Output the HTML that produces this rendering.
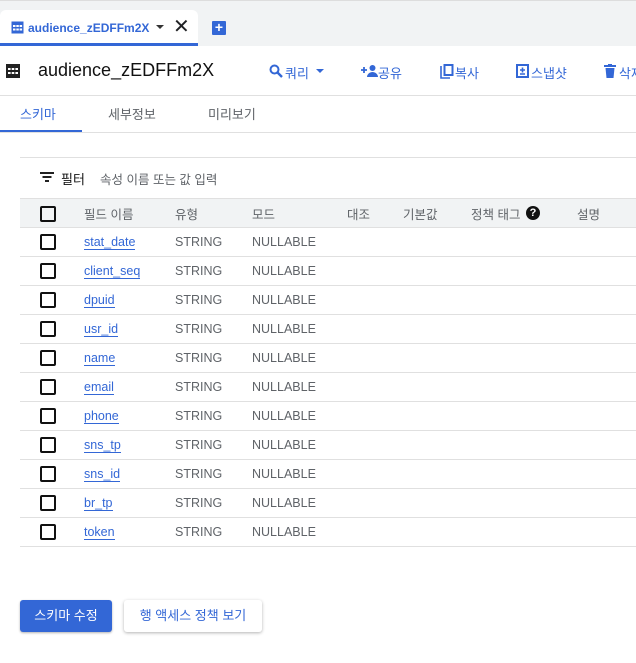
<!DOCTYPE html>
<html><head><meta charset="utf-8"><style>
*{margin:0;padding:0;box-sizing:border-box}
body{width:636px;height:663px;overflow:hidden;background:#fff;font-family:"Liberation Sans","Noto Sans CJK KR",sans-serif;position:relative;color:#202124}
.a{position:absolute;white-space:nowrap}
.blue{color:#3367d6}
.cb{position:absolute;left:40px;width:16px;height:16px;border:2px solid #111;border-radius:2px}
.row{position:absolute;left:20px;width:616px;height:29px;border-bottom:1px solid #e0e0e0;font-size:12.5px}
.row span{position:absolute;top:7px}
.row .n{left:64px;color:#3367d6;border-bottom:1px solid #3367d6;line-height:14px}
.row .t{left:155px;color:#5f6368}
.row .m{left:232px;color:#5f6368}
.row .cb{left:20px;top:6px}
</style></head><body>
<div class="a" style="left:0;top:0;width:636px;height:46px;background:#f1f3f4;border-top:1px solid #ddd"></div>
<div class="a" style="left:0;top:10px;width:198px;height:36px;background:#fff;border-radius:6px 6px 0 0;border-bottom:3px solid #3367d6"></div>
<svg class="a" style="left:11px;top:21px" width="13" height="13" viewBox="0 0 13 13"><rect x="0.5" y="0.5" width="12" height="12" fill="#3367d6"/><g fill="#fff"><rect x="2" y="4" width="2.5" height="2"/><rect x="5.3" y="4" width="2.5" height="2"/><rect x="8.6" y="4" width="2.5" height="2"/><rect x="2" y="7.5" width="2.5" height="2"/><rect x="5.3" y="7.5" width="2.5" height="2"/><rect x="8.6" y="7.5" width="2.5" height="2"/></g></svg>
<div class="a blue" style="left:28px;top:21px;font-size:12px;font-weight:bold">audience_zEDFFm2X</div>
<div class="a" style="left:156px;top:25px;width:0;height:0;border:4px solid transparent;border-top:4px solid #333"></div>
<div class="a" style="left:173px;top:14px;font-size:20px">✕</div>
<div class="a" style="left:212px;top:21px;width:14px;height:14px;background:#3367d6;border-radius:1px;color:#fff;font-size:14px;line-height:13px;text-align:center;font-weight:bold">+</div>
<div class="a" style="left:0;top:95px;width:636px;height:1px;background:#e0e0e0"></div>
<svg class="a" style="left:6px;top:64px" width="14" height="14" viewBox="0 0 14 14"><rect width="14" height="14" fill="#222"/><g fill="#fff"><rect x="2" y="4" width="2.6" height="2"/><rect x="5.7" y="4" width="2.6" height="2"/><rect x="9.4" y="4" width="2.6" height="2"/><rect x="2" y="8" width="2.6" height="2"/><rect x="5.7" y="8" width="2.6" height="2"/><rect x="9.4" y="8" width="2.6" height="2"/></g></svg>
<div class="a" style="left:38px;top:60px;font-size:18px;color:#111">audience_zEDFFm2X</div>
<svg class="a" style="left:269px;top:64px" width="14" height="14" viewBox="0 0 14 14"><circle cx="5.5" cy="5.5" r="4" fill="none" stroke="#3367d6" stroke-width="2"/><path d="M8.5 8.5L13 13" stroke="#3367d6" stroke-width="2.4"/></svg>
<div class="a blue" style="left:285px;top:63px;font-size:13px">쿼리</div>
<div class="a" style="left:316px;top:69px;border:4px solid transparent;border-top:4px solid #3367d6"></div>
<svg class="a" style="left:361px;top:64px" width="17" height="13" viewBox="0 0 17 13"><path d="M0 6h6M3 3v6" stroke="#3367d6" stroke-width="1.8"/><circle cx="11.5" cy="4" r="3" fill="#3367d6"/><path d="M6 13c0-3 3-5 5.5-5s5.5 2 5.5 5z" fill="#3367d6"/></svg>
<div class="a blue" style="left:378px;top:63px;font-size:13px">공유</div>
<svg class="a" style="left:440px;top:64px" width="14" height="15" viewBox="0 0 14 15"><path d="M1 2v12h9" fill="none" stroke="#3367d6" stroke-width="1.6"/><rect x="4.5" y="1" width="8" height="10" fill="none" stroke="#3367d6" stroke-width="2"/></svg>
<div class="a blue" style="left:455px;top:63px;font-size:13px">복사</div>
<svg class="a" style="left:516px;top:64px" width="13" height="14" viewBox="0 0 13 14"><rect x="1" y="1" width="11" height="12" fill="none" stroke="#3367d6" stroke-width="2"/><path d="M6.5 3.5v5M4 6h5M4 10h5" stroke="#3367d6" stroke-width="1.6"/></svg>
<div class="a blue" style="left:531px;top:63px;font-size:13px">스냅샷</div>
<svg class="a" style="left:604px;top:64px" width="12" height="14" viewBox="0 0 12 14"><rect x="0" y="1" width="12" height="2" fill="#3367d6"/><rect x="4" y="0" width="4" height="2" fill="#3367d6"/><path d="M1.5 4h9l-1 10h-7z" fill="#3367d6"/></svg>
<div class="a blue" style="left:619px;top:63px;font-size:13px">삭제</div>
<div class="a blue" style="left:20px;top:104px;font-size:13px">스키마</div>
<div class="a" style="left:108px;top:104px;font-size:13px;color:#5f6368">세부정보</div>
<div class="a" style="left:208px;top:104px;font-size:13px;color:#5f6368">미리보기</div>
<div class="a" style="left:0;top:130px;width:82px;height:2px;background:#3367d6"></div>
<div class="a" style="left:0;top:132px;width:636px;height:1px;background:#e0e0e0"></div>
<div class="a" style="left:20px;top:157px;width:616px;height:1px;background:#e0e0e0"></div>
<svg class="a" style="left:40px;top:172px" width="14" height="10" viewBox="0 0 14 10"><path d="M0 1h14M2.5 5h9M5 9h4" stroke="#222" stroke-width="2"/></svg>
<div class="a" style="left:61px;top:169px;font-size:13px;color:#111">필터</div>
<div class="a" style="left:100px;top:169px;font-size:12.5px;color:#5f6368">속성 이름 또는 값 입력</div>
<div class="a" style="left:20px;top:198px;width:616px;height:30px;background:#f1f3f4;border-top:1px solid #e0e0e0;border-bottom:1px solid #e0e0e0;font-size:12.5px;color:#5f6368">
<div class="cb" style="left:20px;top:7px"></div>
<span class="a" style="left:64px;top:5px">필드 이름</span><span class="a" style="left:155px;top:5px">유형</span><span class="a" style="left:232px;top:5px">모드</span><span class="a" style="left:327px;top:5px">대조</span><span class="a" style="left:383px;top:5px">기본값</span><span class="a" style="left:451px;top:5px">정책 태그</span>
<span class="a" style="left:506px;top:7px;width:14px;height:14px;border-radius:50%;background:#111;color:#fff;font-size:11px;font-weight:bold;text-align:center;line-height:14px">?</span>
<span class="a" style="left:557px;top:5px">설명</span></div>
<div class="row" style="top:228px"><div class="cb"></div><span class="n">stat_date</span><span class="t">STRING</span><span class="m">NULLABLE</span></div>
<div class="row" style="top:257px"><div class="cb"></div><span class="n">client_seq</span><span class="t">STRING</span><span class="m">NULLABLE</span></div>
<div class="row" style="top:286px"><div class="cb"></div><span class="n">dpuid</span><span class="t">STRING</span><span class="m">NULLABLE</span></div>
<div class="row" style="top:315px"><div class="cb"></div><span class="n">usr_id</span><span class="t">STRING</span><span class="m">NULLABLE</span></div>
<div class="row" style="top:344px"><div class="cb"></div><span class="n">name</span><span class="t">STRING</span><span class="m">NULLABLE</span></div>
<div class="row" style="top:373px"><div class="cb"></div><span class="n">email</span><span class="t">STRING</span><span class="m">NULLABLE</span></div>
<div class="row" style="top:402px"><div class="cb"></div><span class="n">phone</span><span class="t">STRING</span><span class="m">NULLABLE</span></div>
<div class="row" style="top:431px"><div class="cb"></div><span class="n">sns_tp</span><span class="t">STRING</span><span class="m">NULLABLE</span></div>
<div class="row" style="top:460px"><div class="cb"></div><span class="n">sns_id</span><span class="t">STRING</span><span class="m">NULLABLE</span></div>
<div class="row" style="top:489px"><div class="cb"></div><span class="n">br_tp</span><span class="t">STRING</span><span class="m">NULLABLE</span></div>
<div class="row" style="top:518px"><div class="cb"></div><span class="n">token</span><span class="t">STRING</span><span class="m">NULLABLE</span></div>
<div class="a" style="left:20px;top:600px;width:92px;height:32px;background:#3367d6;border-radius:3px;color:#fff;font-size:13px;text-align:center;line-height:32px;box-shadow:0 1px 2px rgba(0,0,0,.3)">스키마 수정</div>
<div class="a" style="left:124px;top:600px;width:138px;height:32px;background:#fff;border-radius:3px;color:#3367d6;font-size:13px;text-align:center;line-height:32px;box-shadow:0 1px 3px rgba(0,0,0,.3)">행 액세스 정책 보기</div>
</body></html>
